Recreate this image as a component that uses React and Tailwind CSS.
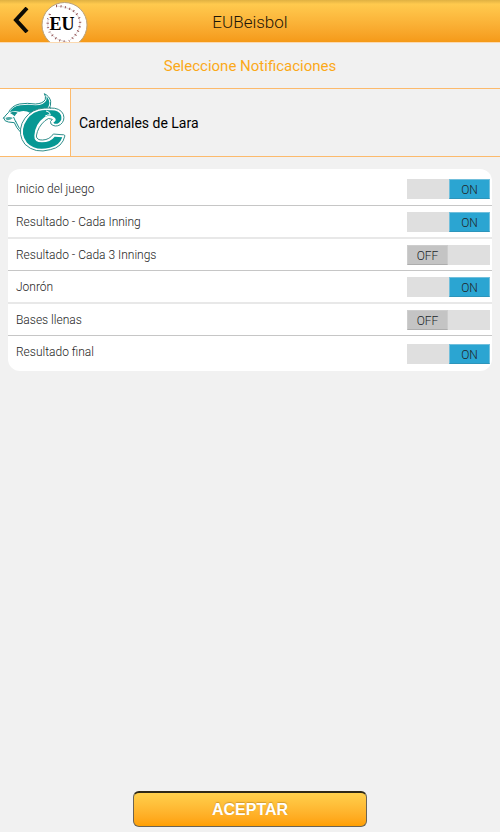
import { useState } from 'react'
import clsx from 'clsx'

const OPTIONS = [
  { id: 'inicio', label: 'Inicio del juego', on: true },
  { id: 'inning', label: 'Resultado - Cada Inning', on: true },
  { id: 'innings3', label: 'Resultado - Cada 3 Innings', on: false },
  { id: 'jonron', label: 'Jonrón', on: true },
  { id: 'bases', label: 'Bases llenas', on: false },
  { id: 'final', label: 'Resultado final', on: true },
]

function BaseballLogo() {
  return (
    <svg viewBox="0 0 48 48" className="w-12 h-12" aria-hidden="true">
      <circle cx="24.5" cy="25" r="22.5" fill="#fff" stroke="#b9a27c" strokeWidth="1" />
      {/* costuras */}
      <g fill="none">
        <path d="M16 6 Q25 6 32 10 Q43 17 39 29 Q36 36 29 41" stroke="#d6cccb" strokeWidth="0.8" />
        <path d="M10 14 Q4 27 13 36 Q18 41 27 42" stroke="#d6cccb" strokeWidth="0.8" />
        <path d="M16 6 Q25 6 32 10 Q43 17 39 29 Q36 36 29 41" stroke="#8f4a4c" strokeWidth="2.4" strokeDasharray="0.9 3.6" />
        <path d="M10 14 Q4 27 13 36 Q18 41 27 42" stroke="#8f4a4c" strokeWidth="2.4" strokeDasharray="0.9 3.6" />
      </g>
      <text
        x="22"
        y="30"
        textAnchor="middle"
        fontFamily="'Liberation Serif', serif"
        fontWeight="700"
        fontSize="18"
        stroke="#fff"
        strokeWidth="3"
        paintOrder="stroke"
        fill="#000"
      >
        EU
      </text>
    </svg>
  )
}

function CardenalesLogo() {
  return (
    <svg viewBox="0 14 210 201" className="w-full h-full" role="img" aria-label="Cardenales de Lara">
      <g strokeLinejoin="round" strokeLinecap="round">
        {/* cabeza y cresta */}
        <path
          d="M11 101 Q18 91 26 84 Q34 65 58 59 Q82 55 106 59 Q130 58 136 45 Q138 36 133 28 Q149 36 152 51 Q154 65 145 76 L110 92 Q78 108 63 145 Q48 130 43 115 L25 113 Q13 112 11 101 Z"
          fill="#fff"
          stroke="#1b8a87"
          strokeWidth="3"
        />
        <path
          d="M29 83 Q38 66 61 63 Q85 60 107 63 Q132 63 139 48 Q141 42 139 36 Q151 48 147 62 Q144 73 134 75 Q108 77 91 86 Q76 77 58 82 L44 80 Z"
          fill="#0b9692"
        />
        <path d="M30 86 Q42 79 53 85 Q47 88 44 96 Q38 90 30 86 Z" fill="#16918d" />
        <path d="M16 101 Q27 95 39 101 Q30 109 20 107 Z" fill="#4fa9a6" />
        <path d="M41 99 L47 112 M47 111 L58 132" fill="none" stroke="#16918d" strokeWidth="3" />
        {/* letra C */}
        <path
          d="M151 71 Q181 70 190 90 Q196 109 181 121 Q165 130 153 119 Q148 111 157 105 Q145 98 135 109 Q113 128 109 155 Q110 168 128 167 Q149 166 160 149 L183 151 Q193 150 195 154 Q187 189 151 196 Q105 209 75 180 Q53 152 66 117 Q82 83 115 74 Q132 70 151 71 Z"
          fill="#fff"
          stroke="#348f8c"
          strokeWidth="3"
        />
        <path
          d="M149 78 Q176 76 183 93 Q188 107 177 115 Q167 122 160 115 Q171 109 165 101 Q152 87 133 99 Q105 119 103 154 Q102 174 126 174 Q151 174 164 157 L187 159 Q178 185 149 190 Q106 201 81 175 Q61 151 73 120 Q87 88 116 80 Q131 76 149 78 Z"
          fill="#079894"
        />
        <path d="M139 80 Q151 83 151 91 Q143 91 136 95" fill="none" stroke="#fff" strokeWidth="3" />
      </g>
    </svg>
  )
}

function Toggle({ id, checked, onChange }) {
  return (
    <label
      htmlFor={id}
      className={clsx(
        'flex w-[83px] h-5 shrink-0 bg-[#dfdfdf] cursor-pointer',
        checked ? 'justify-end' : 'justify-start'
      )}
    >
      <input
        id={id}
        type="checkbox"
        role="switch"
        checked={checked}
        onChange={onChange}
        className="sr-only"
      />
      <span
        className={clsx(
          'w-[41px] pt-0.5 flex items-center justify-center border text-xs font-light text-[#202629]',
          checked
            ? 'bg-[#2ba5d2] border-[#71bfdc] border-b-[#2d95bb]'
            : 'bg-[#c4c4c4] border-[#cdcdcd] border-b-[#adadad]'
        )}
      >
        {checked ? 'ON' : 'OFF'}
      </span>
    </label>
  )
}

export default function App() {
  const [options, setOptions] = useState(OPTIONS)

  const toggle = (id) => {
    setOptions(options.map((o) => (o.id === id ? { ...o, on: !o.on } : o)))
  }

  return (
    <div className="min-h-screen flex flex-col bg-[#f1f1f1] font-['Roboto',sans-serif]">
      {/* Cabecera */}
      <header className="h-[43px] grid grid-cols-[1fr_auto_1fr] items-center border-b border-[#fbd9b0] bg-linear-to-b from-[#e0b142] via-[#ffca4e] via-10% to-[#f59a18] overflow-hidden">
        <div className="flex items-start h-full">
          <button type="button" aria-label="Volver" className="w-10 h-10 pl-0.5 flex items-center justify-center">
            <svg viewBox="0 0 16 26" className="w-4 h-[26px]" fill="none" stroke="#0d0b05" strokeWidth="4">
              <path d="M14 1 L3 13 L14 25" />
            </svg>
          </button>
          <BaseballLogo />
        </div>
        <h1 className="pb-0.5 text-[17px] font-light text-[#1d1608]">EUBeisbol</h1>
      </header>

      <h2 className="h-[45px] pt-0.5 flex items-center justify-center text-[15px] text-[#fba919]">
        Seleccione Notificaciones
      </h2>

      {/* Equipo */}
      <section className="h-[69px] flex items-center border-y border-[#fcba6c]">
        <div className="w-[71px] h-full bg-white border-r border-[#fcba6c]">
          <CardenalesLogo />
        </div>
        <p className="pl-2 text-sm text-black">Cardenales de Lara</p>
      </section>

      {/* Notificaciones */}
      <ul className="mx-2 mt-3 bg-white rounded-xl overflow-hidden">
        {options.map((o, i) => (
          <li
            key={o.id}
            className={clsx(
              'flex items-center justify-between pl-2 pr-0.5',
              i === 0 && 'h-[37px] pt-1',
              i > 0 && i < options.length - 1 && (i % 2 ? 'h-[33px]' : 'h-8'),
              i === options.length - 1 && 'h-[35px]',
              i < options.length - 1 && (i % 2 ? 'border-b-2 border-[#e8e8e8]' : 'border-b border-[#c6c6c6]')
            )}
          >
            <label
              htmlFor={o.id}
              className={clsx('text-xs font-light text-[#1c1c1c]', i === options.length - 1 && 'pb-1')}
            >
              {o.label}
            </label>
            <Toggle id={o.id} checked={o.on} onChange={() => toggle(o.id)} />
          </li>
        ))}
      </ul>

      <footer className="mt-auto pb-[5px] flex justify-center">
        <button
          type="button"
          className="w-[234px] h-9 rounded-md border border-[#6b6455] border-t-2 border-t-[#2e2817] bg-linear-to-b from-[#ffd04c] to-[#ff9f00] font-['Liberation_Sans',sans-serif] font-bold text-base text-white text-shadow-[0_-1px_1px_#a8741a80]"
        >
          ACEPTAR
        </button>
      </footer>
    </div>
  )
}
